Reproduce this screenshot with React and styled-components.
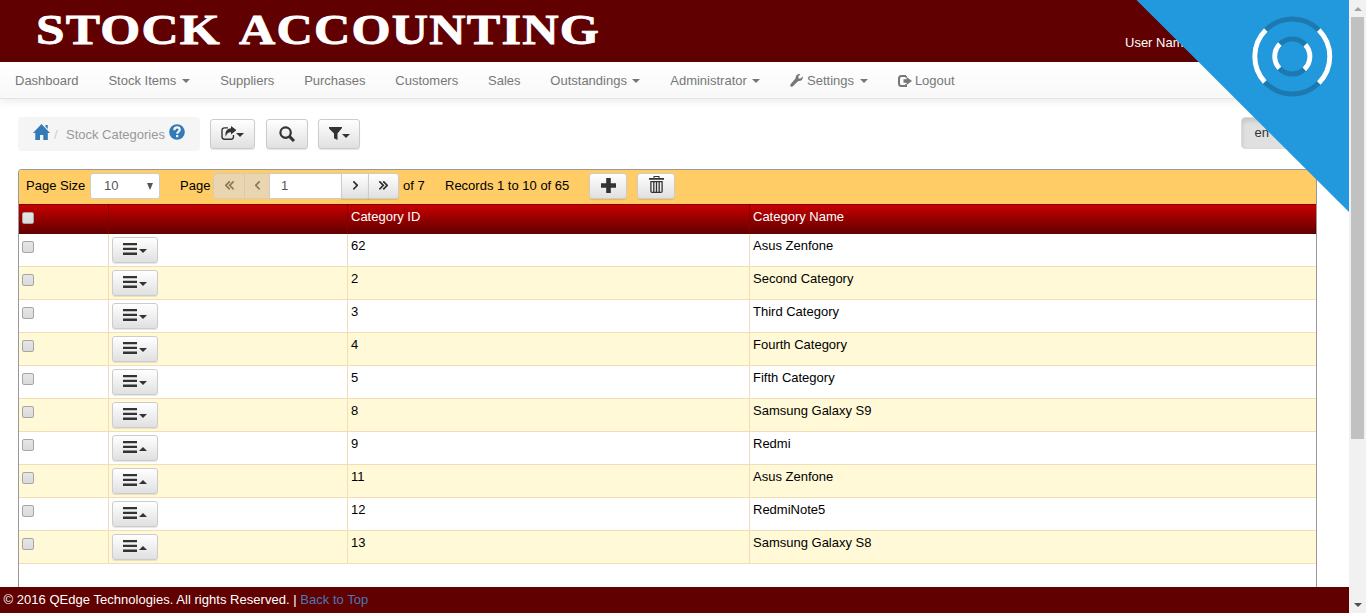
import React from 'react';
import styled, { createGlobalStyle } from 'styled-components';

const Global = createGlobalStyle`
  * { box-sizing: border-box; }
  body { margin: 0; background: #fff; overflow: hidden; }
  svg { display: block; flex: none; }
`;

const Screen = styled.div`
  position: relative;
  display: flex;
  width: 1366px;
  height: 613px;
  overflow: hidden;
  font: 13px/18px "Liberation Sans", Arial, sans-serif;
  color: #000;
`;
const Page = styled.div`
  display: flex;
  flex-direction: column;
  width: 1349px;
  height: 613px;
`;
const Header = styled.header`
  display: flex;
  justify-content: space-between;
  height: 62px;
  flex: none;
  padding-right: 149px;
  background: #600000;
  color: #fff;
`;
const UserName = styled.span`
  padding-top: 34px;
  width: 75px;
  white-space: nowrap;
`;
const Nav = styled.nav`
  display: flex;
  height: 37px;
  flex: none;
  background: linear-gradient(#fff, #f8f8f8);
  border-bottom: 1px solid #e4e4e4;
  box-shadow: 0 1px 10px rgba(0, 0, 0, 0.1);
`;
const NavItem = styled.a`
  display: flex;
  align-items: center;
  padding: 1px 14.8px 0 15px;
  color: #777;
  white-space: nowrap;
  svg:first-child { margin-right: ${(p) => p.$iconGap || 0}px; }
`;
const Caret = styled.i`
  width: 0;
  height: 0;
  flex: none;
  margin-left: ${(p) => p.$gap || 0}px;
  margin-top: ${(p) => p.$drop || 0}px;
  border-left: 4px solid transparent;
  border-right: 4px solid transparent;
  border-${(p) => (p.$up ? 'bottom' : 'top')}: 4px solid currentColor;
`;
const Main = styled.main`
  display: flex;
  flex-direction: column;
  flex: 1;
  min-height: 0;
  padding: 18px 32px 0 18px;
`;
const TopRow = styled.div`
  display: flex;
  align-items: flex-start;
  height: 52px;
  flex: none;
`;
const Breadcrumb = styled.div`
  display: flex;
  align-items: center;
  width: 182px;
  height: 34px;
  margin-right: 10px;
  padding: 1px 0 0 15px;
  border-radius: 4px;
  background: #f5f5f5;
  color: #999;
  white-space: nowrap;
`;
const CrumbIcon = styled.span`
  padding-bottom: 5px;
  margin-left: ${(p) => p.$gap || 0}px;
`;
const Slash = styled.span`
  width: 12px;
  margin-left: 4px;
  color: #ccc;
`;
const Button = styled.button`
  display: flex;
  align-items: center;
  justify-content: center;
  flex: none;
  width: ${(p) => p.$w}px;
  height: ${(p) => p.$h || 26}px;
  margin: ${(p) => p.$m || 0};
  padding: 0 0 ${(p) => p.$lift || 0}px;
  border: 1px solid #ccc;
  border-radius: ${(p) => p.$radius || '3px'};
  background: linear-gradient(#fff, #e0e0e0);
  box-shadow: 0 1px 1px rgba(0, 0, 0, 0.1);
  color: #333;
`;
const MutedButton = styled(Button)`
  background: #e9d6b0;
  border-color: #d7cbb7;
  box-shadow: none;
  color: #8b7a59;
`;
const Language = styled.div`
  display: flex;
  align-items: center;
  width: 76px;
  height: 32px;
  margin-left: auto;
  padding-left: 12.500px;
  border: 1px solid #dbdbdb;
  border-radius: 4px;
  background: #e0e0e0;
  box-shadow: inset 0 3px 5px rgba(0, 0, 0, 0.125);
  color: #333;
`;
const Panel = styled.section`
  display: flex;
  flex-direction: column;
  flex: 1;
  min-height: 0;
  border: 1px solid #999;
  border-bottom: 0;
  border-radius: 4px 4px 0 0;
  overflow: hidden;
`;
const Pager = styled.div`
  display: flex;
  height: 34px;
  flex: none;
  padding: 3px 0 0 7px;
  background: #ffcc66;
`;
const Label = styled.span`
  width: ${(p) => p.$w}px;
  padding-top: 4px;
  flex: none;
  white-space: nowrap;
`;
const Select = styled.div`
  display: flex;
  align-items: center;
  justify-content: space-between;
  width: 70px;
  height: 26px;
  margin-right: 20px;
  padding: 0 6px 0 13px;
  border: 1px solid #ccc;
  border-radius: 3px;
  background: #fff;
  color: #555;
`;
const PageInput = styled.div`
  width: 71px;
  height: 26px;
  padding: 3px 11px;
  border: 1px solid #ccc;
  border-width: 1px 0;
  background: #fff;
  color: #555;
`;
const Row = styled.div`
  display: grid;
  grid-template-columns: 90px 239px 402px 1fr;
  height: 33px;
  flex: none;
  background: ${(p) => (p.$alt ? '#fff9d7' : '#fff')};
`;
const Cell = styled.div`
  padding: 3px;
  border-right: 1px solid #f3ddb8;
  border-bottom: 1px solid #f3ddb4;
  &:last-child { border-right: 0; }
`;
const HeadRow = styled(Row)`
  height: 30px;
  border-top: 1px solid #820000;
  background: linear-gradient(#c60000, #600000);
  color: #fff;
`;
const HeadCell = styled(Cell)`
  border-bottom: 0;
  border-color: #860000;
`;
const Check = styled.span`
  display: block;
  width: 12px;
  height: 12px;
  margin-top: 4px;
  border: 1px solid #a6a6a6;
  border-radius: 2px;
  background: linear-gradient(#e6e6e6, #dadada);
`;
const Footer = styled.footer`
  height: 26px;
  flex: none;
  padding: 4px 3.500px;
  background: #600000;
  color: #fff;
  letter-spacing: 0.030px;
  a { color: #4a78b8; }
`;
const Scrollbar = styled.aside`
  display: flex;
  flex-direction: column;
  align-items: center;
  width: 17px;
  background: #f1f1f1;
`;
const ScrollArrow = styled.div`
  display: flex;
  align-items: center;
  height: 17px;
  color: ${(p) => p.$color};
`;
const Thumb = styled.div`
  width: 13px;
  height: 422px;
  margin-bottom: auto;
  background: #c1c1c1;
`;
const Corner = styled.svg`
  position: absolute;
  top: 0;
  left: 1136px;
`;

const Svg = ({ w, h, children, vb }) => (
  <svg width={w} height={h} viewBox={vb || `0 0 ${w} ${h}`} fill="currentColor">{children}</svg>
);
const Home = () => (
  <Svg w={17} h={16}><path fill="#337ab7" d="M8.500 0 17 9h-2.200v7H10.300v-5H7v5H2.300V9H0L8.500 0zM12.500 1h2.200v4l-2.200-2.200z" /></Svg>
);
const Help = () => (
  <Svg w={16} h={16}>
    <circle cx="8" cy="8" r="7.800" fill="#337ab7" />
    <path fill="none" stroke="#f5f5f5" strokeWidth="2.200" d="M5.300 6.300C5.300 4.200 6.400 3.400 8.100 3.400s2.600 1 2.600 2.300c0 1.900-2.500 1.800-2.500 4" />
    <path fill="#f5f5f5" d="M7 11h2.300v2.200H7z" />
  </Svg>
);
const Share = () => (
  <Svg w={15} h={15}>
    <path fill="none" stroke="currentColor" strokeWidth="1.400" d="M7 1.900H3.500Q1 1.900 1 4.500v6Q1 13.200 3.500 13.200h6.500Q12.500 13.200 12.500 10.500V9" />
    <path d="M10 0 15.500 4.200l-5.500 4.400V6.200C7.500 6 5.800 7.300 4.700 10.700 3.600 5.500 6.300 2.500 10 2.300z" />
  </Svg>
);
const Search = () => (
  <Svg w={16} h={16}>
    <circle cx="6.600" cy="6.600" r="5.200" fill="none" stroke="currentColor" strokeWidth="2.200" />
    <path stroke="currentColor" strokeWidth="3" strokeLinecap="butt" d="m10.400 10.400 4.600 4.600" />
  </Svg>
);
const Filter = () => <Svg w={13} h={14}><path d="M0 0h13v1L8.500 6.500V13L5 11.200V6.500L0 1.500z" /></Svg>;
const Wrench = () => (
  <Svg w={13} h={13}><path d="M12.700 2.600 10.500 4.600 8.600 4.400 8.300 2.400 10.300.2C8.300-.4 5.500.8 5.600 4.300L.4 10.500c-.9 1.400.7 3 2.200 2L8.300 7c3.300.3 5.100-2.100 4.400-4.400z" /></Svg>
);
const Logout = () => (
  <Svg w={14} h={12}>
    <path fill="none" stroke="currentColor" strokeWidth="2" d="M8 1H3.500Q1 1 1 3.500v5Q1 11 3.500 11H8V9.200M8 1v1.500" />
    <path d="M5.500 4.300h3V1.900L14 6l-5.500 4.100V7.700h-3z" />
  </Svg>
);
const Bars = () => <Svg w={14} h={12}><path d="M0 0h14v2.300H0zM0 4.800h14v2.300H0zM0 9.600h14v2.300H0z" /></Svg>;
const Plus = () => <Svg w={15} h={15}><path d="M5.200 0h4.600v5.200H15v4.500H9.800V15H5.200V9.700H0V5.200h5.200z" /></Svg>;
const Trash = () => (
  <Svg w={15} h={17}>
    <path d="M0 2h15v1.800H0zM4.500 0h6v2h-1V1h-4v1h-1z" />
    <path fill="none" stroke="currentColor" strokeWidth="1.300" d="M1.900 5.200v10.300Q1.900 16.300 3 16.300h9q1.100 0 1.100-.8V5.200M1.400 5.600h12.200M4.800 6v10M7.500 6v10M10.200 6v10" />
  </Svg>
);
const Chevron = ({ left, double }) => (
  <svg width={double ? 9 : 5} height="9" viewBox={`0 0 ${double ? 9 : 5} 9`} fill="none" stroke="currentColor" strokeWidth="1.700">
    <g transform={left ? `translate(${double ? 9 : 5} 0) scale(-1 1)` : undefined}>
      <path d="m.3.300 4 4-4 4" />
      {double && <path d="m4.200.300 4 4-4 4" />}
    </g>
  </svg>
);
const Logo = () => (
  <svg
    width="640" height="62" fill="#fff" stroke="#fff" strokeWidth="0.800" letterSpacing="1"
    fontFamily="'Liberation Serif', serif" fontWeight="700" fontSize="42"
  >
    <text x="36" y="43.700" textLength="185" lengthAdjust="spacingAndGlyphs">STOCK</text>
    <text x="239" y="43.700" textLength="361" lengthAdjust="spacingAndGlyphs">ACCOUNTING</text>
  </svg>
);

const rows = [
  ['62', 'Asus Zenfone'], ['2', 'Second Category'], ['3', 'Third Category'],
  ['4', 'Fourth Category'], ['5', 'Fifth Category'], ['8', 'Samsung Galaxy S9'],
  ['9', 'Redmi'], ['11', 'Asus Zenfone'], ['12', 'RedmiNote5'], ['13', 'Samsung Galaxy S8'],
];

export default function App() {
  return (
    <Screen>
      <Global />
      <Page>
        <Header><Logo /><UserName>User Name</UserName></Header>
        <Nav>
          <NavItem>Dashboard</NavItem>
          <NavItem>Stock Items<Caret $gap={6} /></NavItem>
          <NavItem>Suppliers</NavItem>
          <NavItem>Purchases</NavItem>
          <NavItem>Customers</NavItem>
          <NavItem>Sales</NavItem>
          <NavItem>Outstandings<Caret $gap={5.5} /></NavItem>
          <NavItem>Administrator<Caret $gap={5.5} /></NavItem>
          <NavItem $iconGap={4}><Wrench />Settings<Caret $gap={6} /></NavItem>
          <NavItem $iconGap={3}><Logout />Logout</NavItem>
        </Nav>
        <Main>
          <TopRow>
            <Breadcrumb>
              <CrumbIcon><Home /></CrumbIcon><Slash>/</Slash>
              Stock Categories
              <CrumbIcon $gap={4}><Help /></CrumbIcon>
            </Breadcrumb>
            <Button $w={45} $h={30} $m="2px 11px 0 0" $lift={2}><Share /><Caret $drop={3} /></Button>
            <Button $w={42} $h={30} $m="2px 10px 0 0"><Search /></Button>
            <Button $w={42} $h={30} $m="2px 0 0 0"><Filter /><Caret $drop={3} /></Button>
            <Language>en<Caret $gap={20} /></Language>
          </TopRow>
          <Panel>
            <Pager>
              <Label $w={64}>Page Size</Label>
              <Select>10<Svg w={6} h={7}><path d="M0 0h6L3 7z" /></Svg></Select>
              <Label $w={33}>Page</Label>
              <MutedButton $w={32} $radius="3px 0 0 3px" $lift={1}><Chevron left double /></MutedButton>
              <MutedButton $w={26} $radius="0" $m="0 0 0 -1px" $lift={1}><Chevron left /></MutedButton>
              <PageInput>1</PageInput>
              <Button $w={28} $radius="0" $lift={1}><Chevron /></Button>
              <Button $w={31} $radius="0 3px 3px 0" $m="0 4px 0 -1px" $lift={1}><Chevron double /></Button>
              <Label $w={42}>of 7</Label>
              <Label $w={144}>Records 1 to 10 of 65</Label>
              <Button $w={38} $m="0 10px 0 0" $lift={2}><Plus /></Button>
              <Button $w={38} $lift={4}><Trash /></Button>
            </Pager>
            <HeadRow>
              <HeadCell><Check /></HeadCell>
              <HeadCell />
              <HeadCell>Category ID</HeadCell>
              <HeadCell>Category Name</HeadCell>
            </HeadRow>
            {rows.map(([id, name], i) => (
              <Row key={id} $alt={i % 2 === 1}>
                <Cell><Check /></Cell>
                <Cell><Button $w={46} $lift={2}><Bars /><Caret $gap={2} $drop={3} $up={i > 5} /></Button></Cell>
                <Cell>{id}</Cell>
                <Cell>{name}</Cell>
              </Row>
            ))}
          </Panel>
        </Main>
        <Footer>© 2016 QEdge Technologies. All rights Reserved. | <a>Back to Top</a></Footer>
      </Page>
      <Scrollbar>
        <ScrollArrow $color="#a3a3a3"><Caret $up /></ScrollArrow>
        <Thumb />
        <ScrollArrow $color="#505050"><Caret /></ScrollArrow>
      </Scrollbar>
      <Corner width="213" height="213">
        <path fill="#2299dd" d="M.5 0H213v212z" />
        <g fill="none" strokeWidth="5" transform="translate(156.300 56.500)">
          <circle r="37.500" stroke="#1c7ab1" />
          <circle r="17.500" stroke="#1c7ab1" />
          <path stroke="#fff" d="M-26.500-26.500A37.500 37.500 0 0 0-27.500 25.500M26.500-26.500A37.500 37.500 0 0 1 26.500 26.500M-12.400-12.400A17.500 17.500 0 0 0-12.900 11.900M13-11.800A17.500 17.500 0 0 1 12 12.800" />
        </g>
      </Corner>
    </Screen>
  );
}
